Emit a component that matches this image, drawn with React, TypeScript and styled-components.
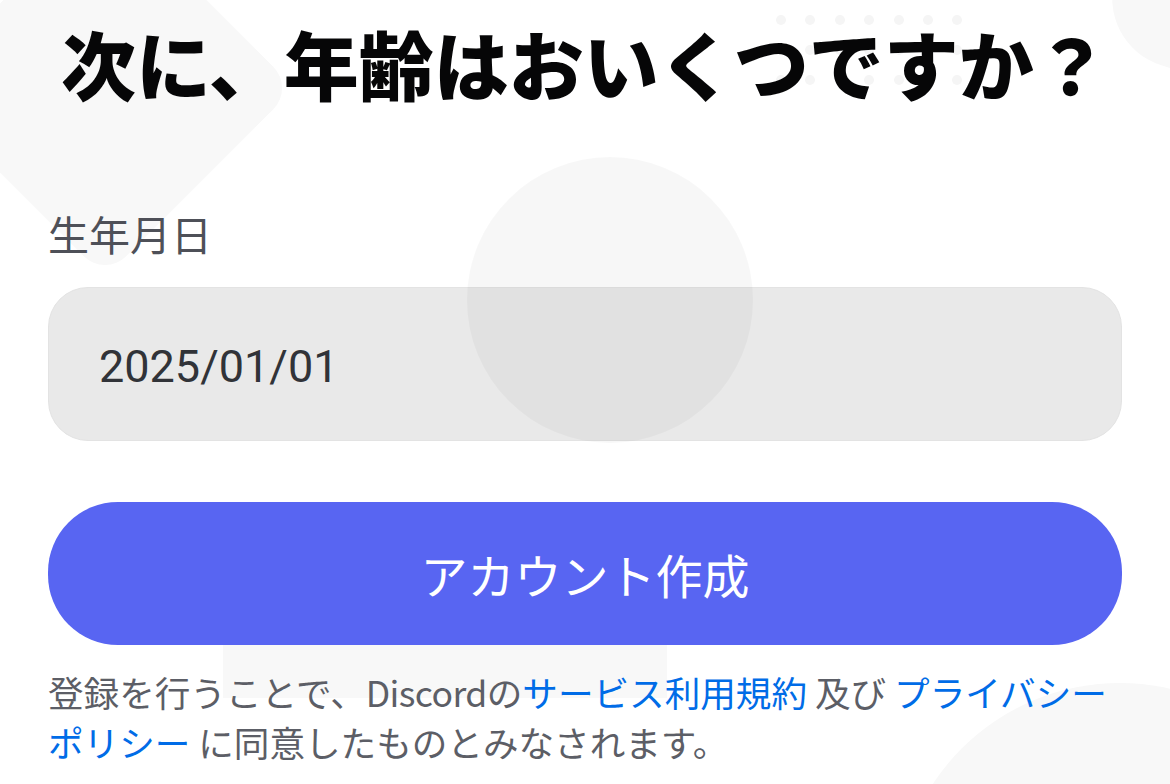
import styled, { createGlobalStyle } from "styled-components";

const GlobalStyle = createGlobalStyle`
  html, body {
    margin: 0;
    padding: 0;
    background: #ffffff;
  }
  body {
    font-family: "Noto Sans CJK JP", "Noto Sans", sans-serif;
    overflow: hidden;
  }
`;

const Page = styled.div`
  position: relative;
  width: 1170px;
  height: 784px;
  overflow: hidden;
  background: #ffffff;
`;

const Content = styled.main`
  position: relative;
  z-index: 1;
  display: flex;
  flex-direction: column;
  padding: 18px 48px 0;
`;

// decorative shapes on the background canvas
const Shape = styled.div<{ $z?: number }>`
  position: absolute;
  z-index: ${(p) => p.$z ?? 0};
  pointer-events: none;
`;

const Diamond = styled(Shape)`
  left: -29px;
  top: -46px;
  width: 268px;
  height: 268px;
  border-radius: 30px;
  background: #f8f8f8;
  transform: rotate(45deg);
`;

const CornerBlob = styled(Shape)`
  left: 1112px;
  top: -70px;
  width: 150px;
  height: 140px;
  border-radius: 60px 60px 40px 70px;
  background: #f8f8f8;
  transform: rotate(18deg);
`;

const Dots = styled(Shape)`
  left: 776px;
  top: 15px;
  display: grid;
  grid-template-columns: repeat(7, 10px);
  grid-auto-rows: 10px;
  column-gap: 19.4px;
  row-gap: 20px;
`;

const Dot = styled.span`
  width: 10px;
  height: 10px;
  border-radius: 50%;
  background: #f5f5f5;
`;

const Bubble = styled(Shape)`
  left: 467px;
  top: 157px;
  width: 286px;
  height: 286px;
  border-radius: 50%;
  background: rgba(0, 0, 0, 0.03);
`;

const FooterBlock = styled(Shape)`
  left: 223px;
  top: 560px;
  width: 444px;
  height: 138px;
  background: #f8f8f8;
`;

const BottomCircle = styled(Shape)`
  left: 896px;
  top: 683px;
  width: 448px;
  height: 448px;
  border-radius: 50%;
  background: #f8f8f8;
`;

const Title = styled.h1`
  margin: 0;
  font-family: "Noto Sans CJK JP", sans-serif;
  font-size: 75px;
  line-height: 90px;
  font-weight: 900;
  color: #060607;
  text-align: center;
  white-space: nowrap;
`;

const Label = styled.label`
  margin-top: 99px;
  font-size: 41px;
  line-height: 52px;
  font-weight: 400;
  color: #4e5058;
`;

const DateField = styled.div`
  margin-top: 28px;
  height: 154px;
  box-sizing: border-box;
  display: flex;
  align-items: center;
  padding: 4px 0 0 50px;
  border: 1px solid #e3e3e3;
  border-radius: 40px;
  background: #e9e9e9;
  font-family: Roboto, "Noto Sans", sans-serif;
  font-size: 45px;
  color: #313338;
`;

const Button = styled.button`
  margin-top: 61px;
  height: 143px;
  border: 0;
  border-radius: 70px;
  background: #5865f2;
  color: #ffffff;
  font-family: "Noto Sans CJK JP", sans-serif;
  font-size: 47px;
  font-weight: 400;
  cursor: pointer;
`;

const Legal = styled.p`
  margin: 22px 0 0;
  font-size: 35.6px;
  line-height: 50px;
  color: #5c5e66;
`;

const Brand = styled.span`
  letter-spacing: -0.6px;
`;

const Link = styled.a`
  color: #006ce7;
  text-decoration: none;
`;

export default function App() {
  return (
    <Page>
      <GlobalStyle />
      <Diamond />
      <CornerBlob />
      <Dots>
        {Array.from({ length: 21 }).map((_, i) => (
          <Dot key={i} />
        ))}
      </Dots>
      <FooterBlock />
      <BottomCircle />
      <Content>
        <Title>次に、年齢はおいくつですか？</Title>
        <Label>生年月日</Label>
        <DateField>2025/01/01</DateField>
        <Button>アカウント作成</Button>
        <Legal>
          登録を行うことで、<Brand>Discord</Brand>の<Link href="#">サービス利用規約</Link> 及び{" "}
          <Link href="#">プライバシーポリシー</Link> に同意したものとみなされます。
        </Legal>
      </Content>
      <Bubble $z={2} />
    </Page>
  );
}
